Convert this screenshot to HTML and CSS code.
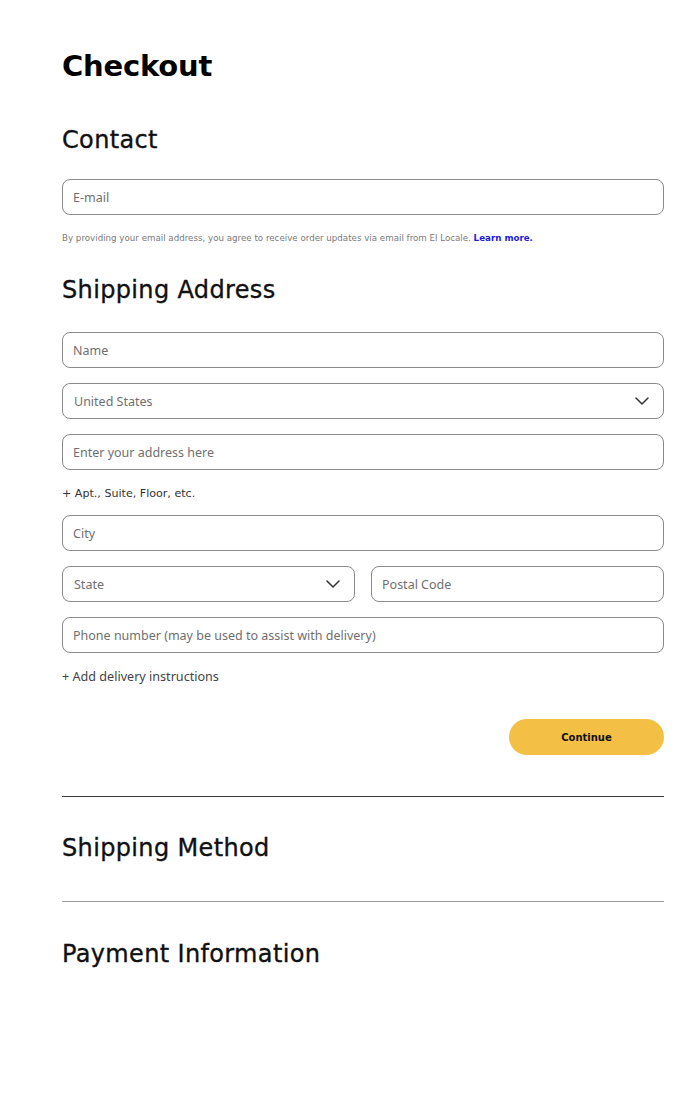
FILE: index.html
```html
<!DOCTYPE html>
<html lang="en">
<head>
<meta charset="utf-8">
<title>Checkout</title>
<link rel="stylesheet" href="styles.css">
</head>
<body>
<main class="page">
  <h1 class="title">Checkout</h1>

  <section class="section">
    <h2 class="heading heading-contact">Contact</h2>
    <input class="field field-email" type="text" placeholder="E-mail">
    <p class="legal">By providing your email address, you agree to receive order updates via email from El Locale. <a class="legal-link" href="#">Learn more.</a></p>
  </section>

  <section class="section">
    <h2 class="heading heading-shipping">Shipping Address</h2>
    <div class="fields">
      <input class="field" type="text" placeholder="Name">
      <div class="field select">
        <span class="select-text">United States</span>
        <svg class="chevron" width="14" height="8" viewBox="0 0 14 8"><path d="M1 1l6 6 6-6" fill="none" stroke="#333" stroke-width="1.5" stroke-linecap="round" stroke-linejoin="round"/></svg>
      </div>
      <input class="field" type="text" placeholder="Enter your address here">
      <a class="add-link add-apt" href="#">+ Apt., Suite, Floor, etc.</a>
      <input class="field" type="text" placeholder="City">
      <div class="row">
        <div class="field select">
          <span class="select-text">State</span>
          <svg class="chevron" width="14" height="8" viewBox="0 0 14 8"><path d="M1 1l6 6 6-6" fill="none" stroke="#333" stroke-width="1.5" stroke-linecap="round" stroke-linejoin="round"/></svg>
        </div>
        <input class="field" type="text" placeholder="Postal Code">
      </div>
      <input class="field" type="text" placeholder="Phone number (may be used to assist with delivery)">
      <a class="add-link add-delivery" href="#">+ Add delivery instructions</a>
    </div>
    <div class="actions">
      <button class="btn" type="button">Continue</button>
    </div>
  </section>

  <hr class="divider divider-dark">
  <h2 class="heading heading-collapsed">Shipping Method</h2>
  <hr class="divider divider-light">
  <h2 class="heading heading-collapsed heading-last">Payment Information</h2>
</main>
</body>
</html>
```

FILE: styles.css
```css
* {
  box-sizing: border-box;
}

html, body {
  margin: 0;
  padding: 0;
  background: #ffffff;
}

body {
  font-family: "DejaVu Sans", "Noto Sans", sans-serif;
  color: #111;
}

.page {
  display: flex;
  flex-direction: column;
  padding: 48px 28px 60px 62px;
}

.title {
  margin: 0;
  font-size: 29px;
  line-height: 36px;
  font-weight: 700;
  color: #000;
  letter-spacing: -0.2px;
}

.section {
  display: flex;
  flex-direction: column;
}

.heading {
  margin: 0;
  font-size: 24px;
  line-height: 30px;
  font-weight: 400;
  color: #111;
  letter-spacing: 0.35px;
  -webkit-text-stroke: 0.35px #111;
}

.heading-contact {
  margin-top: 41px;
}

.heading-shipping {
  margin-top: 31px;
}

.field {
  display: block;
  width: 100%;
  min-width: 0;
  height: 36px;
  border: 1px solid #8a8a8a;
  border-radius: 8px;
  padding: 0 10px;
  font-family: "Noto Sans", sans-serif;
  font-size: 12.5px;
  color: #333;
  background: #fff;
  outline: none;
}

.field::placeholder {
  color: #6f6f6f;
}

.field-email {
  margin-top: 24px;
}

.legal {
  margin: 17px 0 0;
  font-size: 8.7px;
  line-height: 12px;
  color: #7a7a7a;
}

.legal-link {
  color: #1a1adb;
  font-weight: 700;
  text-decoration: none;
}

.fields {
  display: flex;
  flex-direction: column;
  gap: 15px;
  margin-top: 27px;
}

.select {
  display: flex;
  align-items: center;
  justify-content: space-between;
  padding-left: 11px;
  padding-right: 14px;
}

.select-text {
  color: #6f6f6f;
}

.chevron {
  display: block;
}

.row {
  display: grid;
  grid-template-columns: 1fr 1fr;
  gap: 16px;
}

.add-link {
  display: block;
  line-height: 16px;
  text-decoration: none;
  color: #333;
}

.add-apt {
  font-size: 11.1px;
  margin-top: 1px;
  margin-bottom: -2px;
}

.add-delivery {
  font-family: "Noto Sans", sans-serif;
  font-size: 12.6px;
  color: #444;
  margin-top: 1px;
  margin-bottom: -1px;
}

.actions {
  display: flex;
  justify-content: flex-end;
  margin-top: 35px;
}

.btn {
  width: 155px;
  height: 36px;
  border: none;
  border-radius: 18px;
  background: #f4bf45;
  font-family: "DejaVu Sans", sans-serif;
  font-size: 10px;
  font-weight: 700;
  color: #111;
  cursor: pointer;
}

.divider {
  width: 100%;
  margin: 0;
  border: none;
  height: 1px;
}

.divider-dark {
  margin-top: 41px;
  background: #3a3a3a;
}

.divider-light {
  margin-top: 38px;
  background: #9a9a9a;
}

.heading-collapsed {
  margin-top: 36px;
}

.heading-last {
  margin-top: 37px;
}
```
